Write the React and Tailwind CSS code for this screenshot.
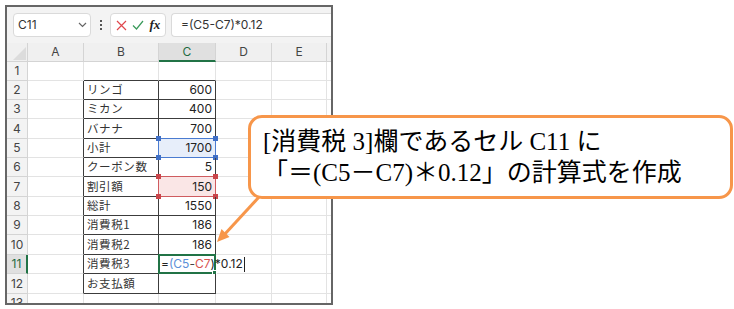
import React from 'react'

const rows = [
  { n: 1, b: '', c: '', h: 'h-[19px]' },
  { n: 2, b: 'リンゴ', c: '600', h: 'h-[19px]' },
  { n: 3, b: 'ミカン', c: '400', h: 'h-[19px]' },
  { n: 4, b: 'バナナ', c: '700', h: 'h-[20px]' },
  { n: 5, b: '小計', c: '1700', h: 'h-[19px]', sel: 'blue' },
  { n: 6, b: 'クーポン数', c: '5', h: 'h-[19px]' },
  { n: 7, b: '割引額', c: '150', h: 'h-[20px]', sel: 'red' },
  { n: 8, b: '総計', c: '1550', h: 'h-[19px]' },
  { n: 9, b: '消費税1', c: '186', h: 'h-[19px]' },
  { n: 10, b: '消費税2', c: '186', h: 'h-[20px]' },
  { n: 11, b: '消費税3', c: '', h: 'h-[19px]', sel: 'green' },
  { n: 12, b: 'お支払額', c: '', h: 'h-[20px]' },
  { n: 13, b: '', c: '', h: 'h-[19px]' },
]

const cols = ['A', 'B', 'C', 'D', 'E']

function Corners({ color }) {
  return (
    <>
      <span className={`absolute -left-[3px] -top-[3px] w-[5px] h-[5px] ${color}`} />
      <span className={`absolute -right-[3px] -top-[3px] w-[5px] h-[5px] ${color}`} />
      <span className={`absolute -left-[3px] -bottom-[3px] w-[5px] h-[5px] ${color}`} />
      <span className={`absolute -right-[3px] -bottom-[3px] w-[5px] h-[5px] ${color}`} />
    </>
  )
}

function Sheet() {
  return (
    <div className="ml-[5px] mt-[5px] w-[328px] h-[300px] border-2 border-[#666] overflow-hidden bg-white flex flex-col font-['Noto_Sans_CJK_JP',sans-serif]">
      {/* formula bar */}
      <div className="h-[36px] shrink-0 bg-[#f3f3f3] flex items-center pl-[6px] gap-[3px]">
        <div className="w-[78px] h-[24px] bg-white border border-[#dadada] rounded-[4px] flex items-center justify-between pl-[4px] pr-[3px]">
          <span className="text-[12px] text-[#333] font-['Inter',sans-serif]">C11</span>
          <svg width="9" height="6" viewBox="0 0 9 6"><path d="M1 1l3.5 3.5L8 1" fill="none" stroke="#666" strokeWidth="1.2" /></svg>
        </div>
        <div className="w-[13px] flex flex-col items-center gap-[2px]">
          <span className="w-[2px] h-[2px] bg-[#555]" />
          <span className="w-[2px] h-[2px] bg-[#555]" />
          <span className="w-[2px] h-[2px] bg-[#555]" />
        </div>
        <div className="w-[56px] h-[24px] bg-white border border-[#dadada] rounded-[4px] flex items-center justify-around px-[2px]">
          <svg width="11" height="11" viewBox="0 0 11 11"><path d="M1 1l9 9M10 1l-9 9" stroke="#e0474c" strokeWidth="1.2" /></svg>
          <svg width="12" height="10" viewBox="0 0 12 10"><path d="M1 5.5l3.5 3.5L11 1" fill="none" stroke="#3a9a5a" strokeWidth="1.2" /></svg>
          <span className="text-[13px] italic font-bold text-[#222] font-['Liberation_Serif',serif]">fx</span>
        </div>
        <div className="flex-1 h-[24px] ml-[2px] bg-white border border-[#dadada] rounded-l-[4px] border-r-0 flex items-center pl-[9px]">
          <span className="text-[12px] text-[#333] font-['Inter',sans-serif]">=(C5-C7)*0.12</span>
        </div>
      </div>
      {/* grid */}
      <div className="grid grid-cols-[21px_56px_75px_57px_56px_55px_1fr] text-[12px]">
        {/* column headers */}
        <div className="h-[19px] bg-[#f0f0f0] border-r border-b border-[#d4d4d4] relative overflow-hidden">
          <svg className="absolute right-[1px] bottom-[1px]" width="13" height="13" viewBox="0 0 13 13"><path d="M13 0L13 13L0 13Z" fill="#dcdcdc" /></svg>
        </div>
        {cols.map((c) => (
          <div
            key={c}
            className={`h-[19px] flex items-center justify-center border-r border-[#d4d4d4] font-['Inter',sans-serif] ${
              c === 'C' ? 'bg-[#e0e0e0] text-[#1e6b41] border-b-2 border-b-[#217346]' : 'bg-[#f0f0f0] text-[#444] border-b'
            }`}
          >
            {c}
          </div>
        ))}
        <div className="h-[19px] bg-[#f0f0f0] border-b border-[#d4d4d4]" />

        {rows.map((r) => {
          const inTable = r.n >= 2 && r.n <= 12
          return (
            <React.Fragment key={r.n}>
              <div
                className={`${r.h} flex items-center justify-center border-b font-['Inter',sans-serif] ${
                  r.n === 11
                    ? 'bg-[#e0e0e0] text-[#1e6b41] border-r-2 border-[#d4d4d4] border-r-[#217346]'
                    : 'bg-[#f3f3f3] text-[#444] border-r border-[#d4d4d4]'
                }`}
              >
                {r.n}
              </div>
              <div className={`${r.h} border-r border-b border-[#e3e3e3] ${inTable ? 'border-r-[#3c3c3c]' : ''}`} />
              <div
                className={`${r.h} border-r border-b border-[#e3e3e3] flex items-center pl-[3px] text-[11.5px] tracking-[0.6px] text-[#333] ${
                  inTable || r.n === 1 ? 'border-b-[#3c3c3c]' : ''
                } ${inTable ? 'border-r-[#3c3c3c]' : ''}`}
              >
                {r.b}
              </div>
              <div
                className={`${r.h} relative border-r border-b border-[#e3e3e3] flex items-center justify-end pr-[3px] text-[#222] font-['Inter',sans-serif] ${
                  inTable || r.n === 1 ? 'border-b-[#3c3c3c]' : ''
                } ${inTable ? 'border-r-[#3c3c3c]' : ''} ${r.sel === 'blue' ? 'bg-[#e7eefa]' : ''} ${r.sel === 'red' ? 'bg-[#fae6e6]' : ''}`}
              >
                {r.c}
                {r.sel === 'blue' && (
                  <div className="absolute -left-px -top-px -right-px -bottom-px border-[1.5px] border-[#4a7bd0]">
                    <Corners color="bg-[#3f6fc6]" />
                  </div>
                )}
                {r.sel === 'red' && (
                  <div className="absolute -left-px -top-px -right-px -bottom-px border-[1.5px] border-[#cf5b5f]">
                    <Corners color="bg-[#c9454a]" />
                  </div>
                )}
                {r.sel === 'green' && (
                  <>
                    <div className="absolute -left-px -top-px -right-px -bottom-px border-2 border-[#217346]">
                      <span className="absolute -right-[3px] -bottom-[3px] w-[5px] h-[5px] bg-[#217346] border border-white" />
                    </div>
                    <div className="absolute left-[2px] top-0 h-full flex items-center whitespace-nowrap z-10 text-[#222]">
                      <span>=</span>
                      <span className="text-[#5b8fd8]">(C5</span>
                      <span className="text-[#444]">-</span>
                      <span className="text-[#d9534f]">C7</span>
                      <span>)*0.12</span>
                      <span className="ml-[1px] w-px h-[15px] bg-[#222]" />
                    </div>
                  </>
                )}
              </div>
              <div className={`${r.h} border-r border-b border-[#e3e3e3]`} />
              <div className={`${r.h} border-r border-b border-[#e3e3e3]`} />
              <div className={`${r.h} border-b border-[#e3e3e3]`} />
            </React.Fragment>
          )
        })}
      </div>
    </div>
  )
}

export default function App() {
  return (
    <div className="relative w-[734px] h-[309px] bg-white overflow-hidden">
      <Sheet />

      {/* callout */}
      <div className="absolute left-[248px] top-[115px] w-[485px] h-[84px] bg-white border-[3px] border-[#f7964a] rounded-[14px] pl-[12px] pt-[8px] text-[25px] leading-[31px] text-black font-['Liberation_Serif','Noto_Sans_CJK_JP',serif] whitespace-nowrap">
        <div>[消費税 3]欄であるセル C11 に</div>
        <div>「＝(C5－C7)＊0.12」の計算式を作成</div>
      </div>

      <svg className="absolute left-0 top-0 pointer-events-none" width="734" height="309" viewBox="0 0 734 309">
        <line x1="259" y1="197" x2="224" y2="235" stroke="#f7964a" strokeWidth="3" />
        <polygon points="217,242 229.5,237 221.5,229" fill="#f7964a" />
      </svg>
    </div>
  )
}
